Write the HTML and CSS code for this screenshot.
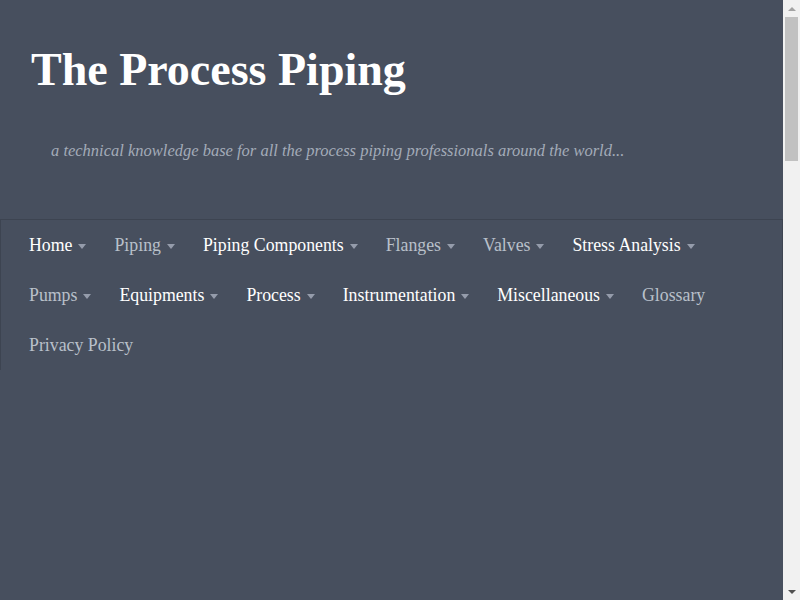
FILE: index.html
```html
<!DOCTYPE html>
<html lang="en">
<head>
    <meta charset="UTF-8">
    <meta name="viewport" content="width=device-width, initial-scale=1.0">
    <title>The Process Piping</title>
    <link rel="stylesheet" href="styles.css">
</head>
<body>
    <header class="site-header">
        <h1 class="site-title"><a href="#">The Process Piping</a></h1>
        <p class="site-tagline">a technical knowledge base for all the process piping professionals around the world...</p>
    </header>

    <nav class="main-nav">
        <ul class="menu">
            <li><a href="#">Home</a><span class="caret"></span></li>
            <li><a href="#" class="visited">Piping</a><span class="caret"></span></li>
            <li><a href="#">Piping Components</a><span class="caret"></span></li>
            <li><a href="#" class="visited">Flanges</a><span class="caret"></span></li>
            <li><a href="#" class="visited">Valves</a><span class="caret"></span></li>
            <li><a href="#">Stress Analysis</a><span class="caret"></span></li>
            <li><a href="#" class="visited">Pumps</a><span class="caret"></span></li>
            <li><a href="#">Equipments</a><span class="caret"></span></li>
            <li><a href="#">Process</a><span class="caret"></span></li>
            <li><a href="#">Instrumentation</a><span class="caret"></span></li>
            <li><a href="#">Miscellaneous</a><span class="caret"></span></li>
            <li><a href="#" class="visited">Glossary</a></li>
            <li><a href="#" class="visited">Privacy Policy</a></li>
        </ul>
    </nav>

    <div class="content"></div>

    <!-- window scrollbar, as seen in the capture -->
    <div class="scrollbar" aria-hidden="true">
        <div class="sb-btn"><span class="sb-up"></span></div>
        <div class="sb-track"><div class="sb-thumb"></div></div>
        <div class="sb-btn"><span class="sb-down"></span></div>
    </div>
</body>
</html>
```

FILE: styles.css
```css
body {
    font-family: "Liberation Serif", "Times New Roman", serif;
    background-color: #474f5e;
    color: #fff;
    margin: 0 17px 0 0;
    padding: 0;
}
a {
    color: #fff;
    text-decoration: none;
}
.site-header {
    padding: 38px 31px 0;
    height: 219px;
    box-sizing: border-box;
}
.site-title {
    margin: 0;
    font-size: 46px;
    line-height: 64px;
    font-weight: bold;
}
.site-tagline {
    margin: 39px 0 0 20px;
    font-size: 16.5px;
    font-style: italic;
    color: #a3abb8;
}
.main-nav {
    border: 1px solid #3d4451;
    border-bottom: none;
    padding: 0 14px;
}
.menu {
    list-style: none;
    margin: 0;
    padding: 0;
    display: flex;
    flex-wrap: wrap;
}
.menu li {
    display: flex;
    align-items: center;
    height: 50px;
    padding: 0 14px;
    font-size: 17.8px;
}
.menu a.visited {
    color: #b9c0ca;
}
.caret {
    width: 0;
    height: 0;
    margin-left: 6px;
    margin-top: 2px;
    border-left: 4.5px solid transparent;
    border-right: 4.5px solid transparent;
    border-top: 5px solid #959cab;
}
.content {
    height: 1800px;
}
.scrollbar {
    position: fixed;
    top: 0;
    right: 0;
    width: 17px;
    height: 100vh;
    background: #f1f1f1;
    display: flex;
    flex-direction: column;
}
.sb-btn {
    height: 17px;
    display: flex;
    align-items: center;
    justify-content: center;
}
.sb-up {
    border-left: 4px solid transparent;
    border-right: 4px solid transparent;
    border-bottom: 4px solid #a3a3a3;
}
.sb-down {
    border-left: 4px solid transparent;
    border-right: 4px solid transparent;
    border-top: 4px solid #505050;
}
.sb-track {
    flex: 1;
    padding: 0 2px;
}
.sb-thumb {
    height: 144px;
    background: #c1c1c1;
}
```
